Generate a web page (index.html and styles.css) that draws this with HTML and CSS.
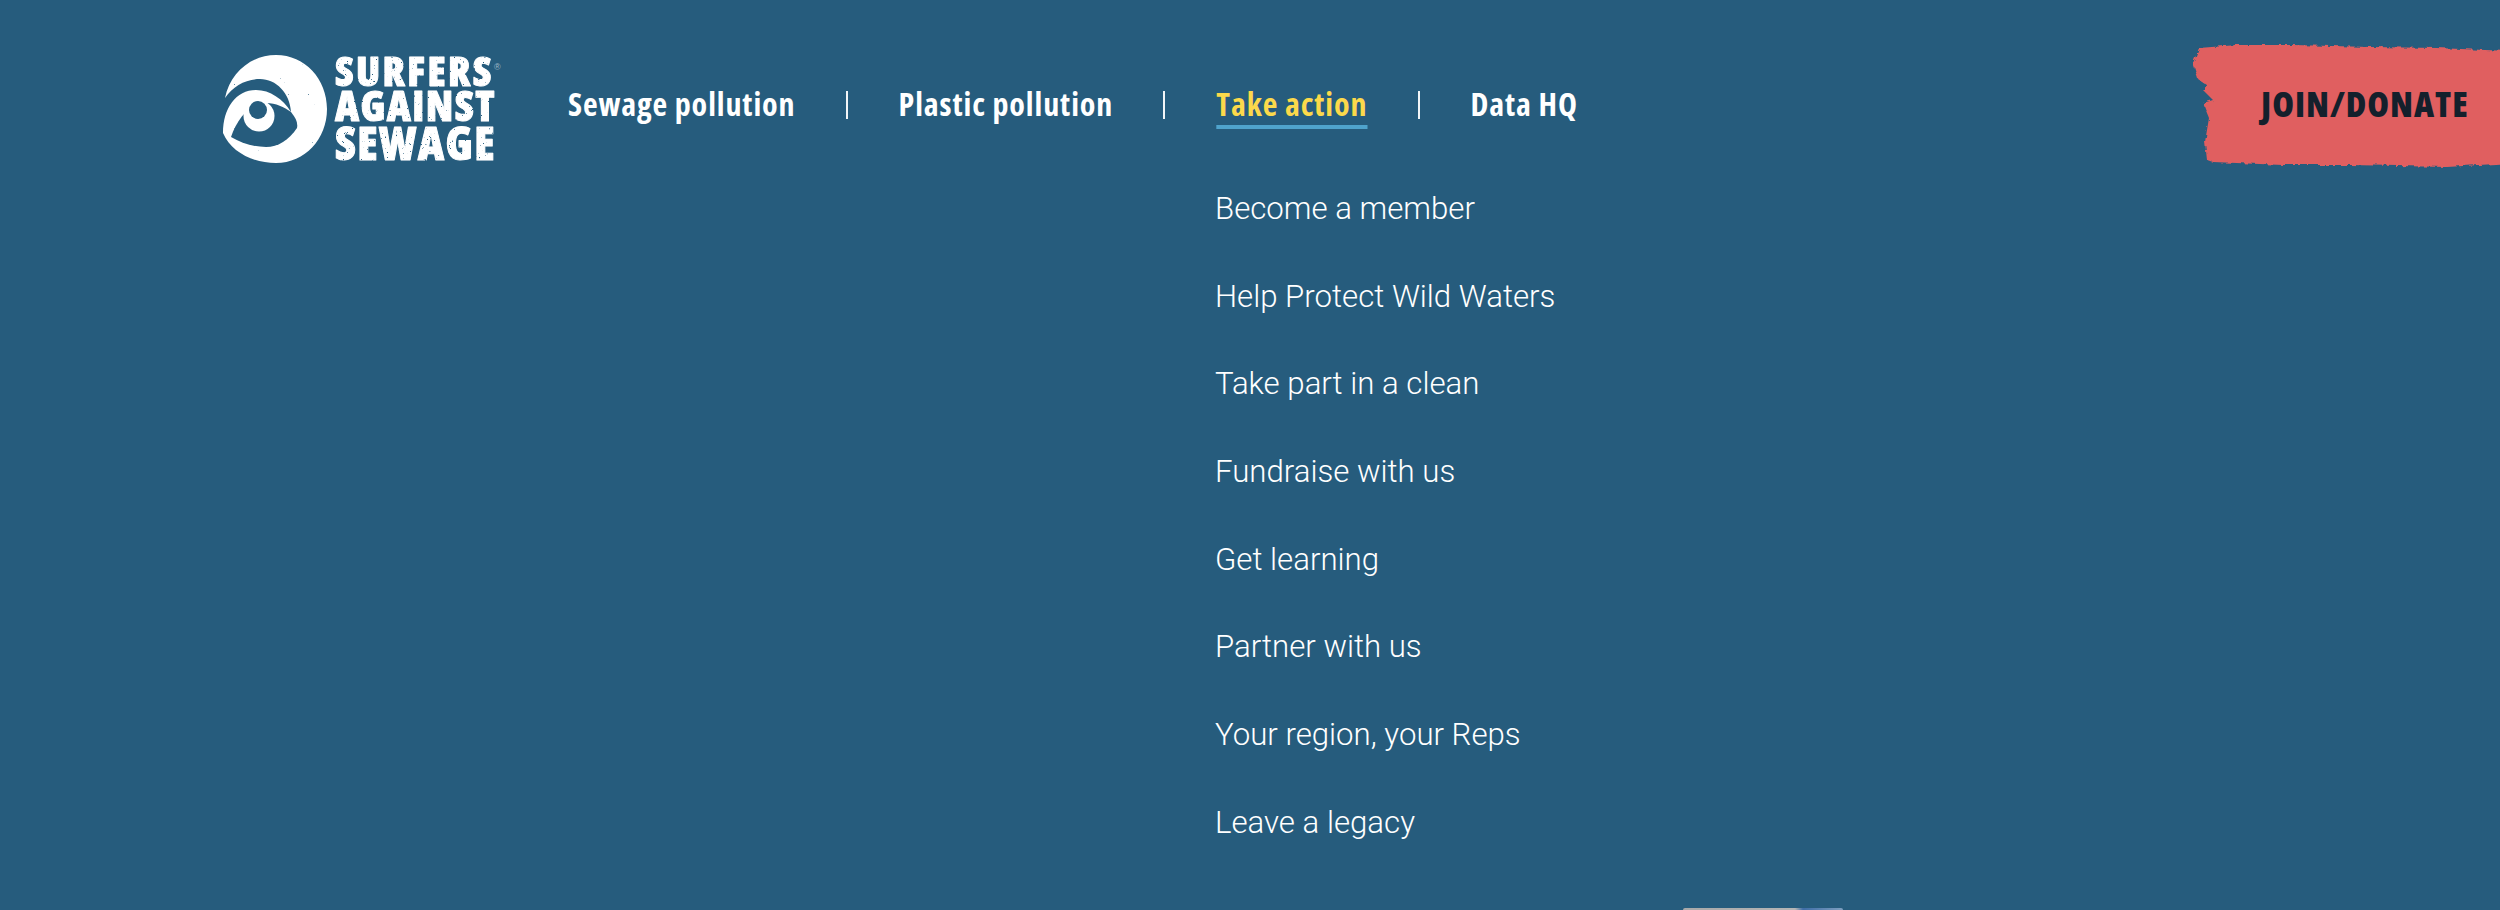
FILE: index.html
```html
<!DOCTYPE html>
<html lang="en">
<head>
    <meta charset="UTF-8">
    <title>Surfers Against Sewage</title>
    <link rel="stylesheet" href="styles.css">
</head>
<body>
    <header class="site-header">
        <a class="logo" href="#">
            <svg viewBox="0 0 290 120" width="290" height="120">
                <defs>
                    <filter id="worn" x="-5%" y="-5%" width="110%" height="110%">
                        <feTurbulence type="fractalNoise" baseFrequency="0.45" numOctaves="2" seed="4" result="noise"/>
                        <feColorMatrix in="noise" type="matrix" values="0 0 0 0 0  0 0 0 0 0  0 0 0 0 0  0 0 0 12 -2.4" result="mask"/>
                        <feComposite in="SourceGraphic" in2="mask" operator="in"/>
                    </filter>
                    <filter id="worn-light" x="0" y="0" width="100%" height="100%">
                        <feTurbulence type="fractalNoise" baseFrequency="0.5" numOctaves="2" seed="9" result="noise"/>
                        <feColorMatrix in="noise" type="matrix" values="0 0 0 0 0  0 0 0 0 0  0 0 0 0 0  0 0 0 14 -1.9" result="mask"/>
                        <feComposite in="SourceGraphic" in2="mask" operator="in"/>
                    </filter>
                </defs>
                <g filter="url(#worn-light)">
                    <path fill="#fff" d="M9 50 C14 25 35 7 60 7 C89 7 111 31 111 61 C111 91 89 115 60 115 C37 115 15 104 7 85 C7 60 20 42 40 42 C54 42 67 51 75 64 C74 45 60 31 44 31 C30 31 17 38 9 50 Z"/>
                    <path fill="#265c7d" d="M15 89 C22 68 36 55 50 55 C60 55 68 59 75 64 C80 70 82 75 81 80 C73 92 62 99 50 99 C37 99 25 95 15 89 Z"/>
                    <circle fill="#fff" cx="43" cy="68" r="15.5"/>
                    <circle fill="#265c7d" cx="42" cy="62" r="9"/>
                </g>
                <g class="logo-text" filter="url(#worn)">
                    <text x="119" y="38" font-size="41" letter-spacing="2.4">SURFERS</text>
                    <text x="119" y="73" font-size="42" letter-spacing="1.4">AGAINST</text>
                    <text x="119" y="112" font-size="46" letter-spacing="1.4">SEWAGE</text>
                </g>
                <text class="logo-reg" x="278" y="22" font-size="9">®</text>
            </svg>
        </a>
        <nav>
            <ul class="main-nav">
                <li><a href="#">Sewage pollution</a></li>
                <li><a href="#">Plastic pollution</a></li>
                <li><a class="active" href="#">Take action</a></li>
                <li><a href="#">Data HQ</a></li>
            </ul>
        </nav>
        <a class="donate" href="#">
            <svg class="donate-bg" viewBox="0 0 310 130" preserveAspectRatio="none" width="310" height="130">
                <defs>
                    <filter id="ragged" x="-5%" y="-5%" width="110%" height="110%">
                        <feTurbulence type="fractalNoise" baseFrequency="0.18" numOctaves="2" seed="7" result="noise"/>
                        <feDisplacementMap in="SourceGraphic" in2="noise" scale="5"/>
                    </filter>
                </defs>
                <path fill="#e05e60" filter="url(#ragged)" d="M9 8 L47 5 L103 5 L180 7 L247 8 L320 11 L320 123 L257 127 L160 125 L93 125 L23 122 L17 120 L15 102 L19 78 L13 63 L23 60 L13 50 L17 45 L8 39 L3 23 Z"/>
            </svg>
            <span class="donate-label">JOIN/DONATE</span>
        </a>
    </header>
    <ul class="sub-nav">
        <li><a href="#">Become a member</a></li>
        <li><a href="#">Help Protect Wild Waters</a></li>
        <li><a href="#">Take part in a clean</a></li>
        <li><a href="#">Fundraise with us</a></li>
        <li><a href="#">Get learning</a></li>
        <li><a href="#">Partner with us</a></li>
        <li><a href="#">Your region, your Reps</a></li>
        <li><a href="#">Leave a legacy</a></li>
    </ul>
    <div class="peek"></div>
</body>
</html>
```

FILE: styles.css
```css
body {
    margin: 0;
    height: 910px;
    overflow: hidden;
    background-color: #265c7d;
    color: #fff;
    font-family: "Open Sans", sans-serif;
}

a {
    color: inherit;
    text-decoration: none;
}

ul {
    list-style: none;
    margin: 0;
    padding: 0;
}

.site-header {
    display: flex;
    align-items: center;
    height: 166px;
    padding: 22px 0 0 216px;
}

.logo {
    display: block;
    width: 352px;
    height: 120px;
    margin-top: 6px;
}

.logo-text {
    fill: #fff;
    stroke: #fff;
    stroke-width: 1px;
    stroke-linejoin: round;
    font-family: "Open Sans", sans-serif;
    font-stretch: 75%;
    font-weight: 800;
}

.logo-reg {
    fill: #9fb9c9;
    font-family: "Liberation Sans", Arial, sans-serif;
}

.main-nav {
    display: flex;
    font-stretch: 75%;
    font-size: 32px;
    font-weight: 700;
    letter-spacing: 0.9px;
}

.main-nav li + li {
    margin-left: 50px;
    padding-left: 51px;
    border-left: 2px solid #f2f5f7;
}

.main-nav a {
    display: block;
    height: 28px;
    line-height: 26px;
}

.main-nav .active {
    color: #fbd94b;
    text-decoration: underline;
    text-decoration-color: #4fa3cc;
    text-decoration-thickness: 4px;
    text-decoration-skip-ink: none;
    text-underline-offset: 9px;
}

.donate {
    position: relative;
    margin-left: auto;
    width: 310px;
    height: 130px;
    display: flex;
    align-items: center;
}

.donate-bg {
    position: absolute;
    left: 0;
    top: 0;
}

.donate-label {
    position: relative;
    margin: 0 0 3px 71px;
    color: #14202c;
    font-stretch: 75%;
    font-weight: 800;
    font-size: 35px;
    letter-spacing: 1px;
    white-space: nowrap;
}

.sub-nav {
    padding: 2px 0 0 1215px;
    font-family: Roboto, sans-serif;
    font-weight: 300;
    font-size: 31.2px;
}

.sub-nav li {
    height: 87.7px;
}

.peek {
    position: absolute;
    left: 1683px;
    bottom: 0;
    width: 160px;
    height: 2px;
    border-radius: 2px 2px 0 0;
    background: linear-gradient(90deg, #a9a9a9, #b5b5b5 70%, #3f6ea8 75%, #7fa0c0);
}
```
